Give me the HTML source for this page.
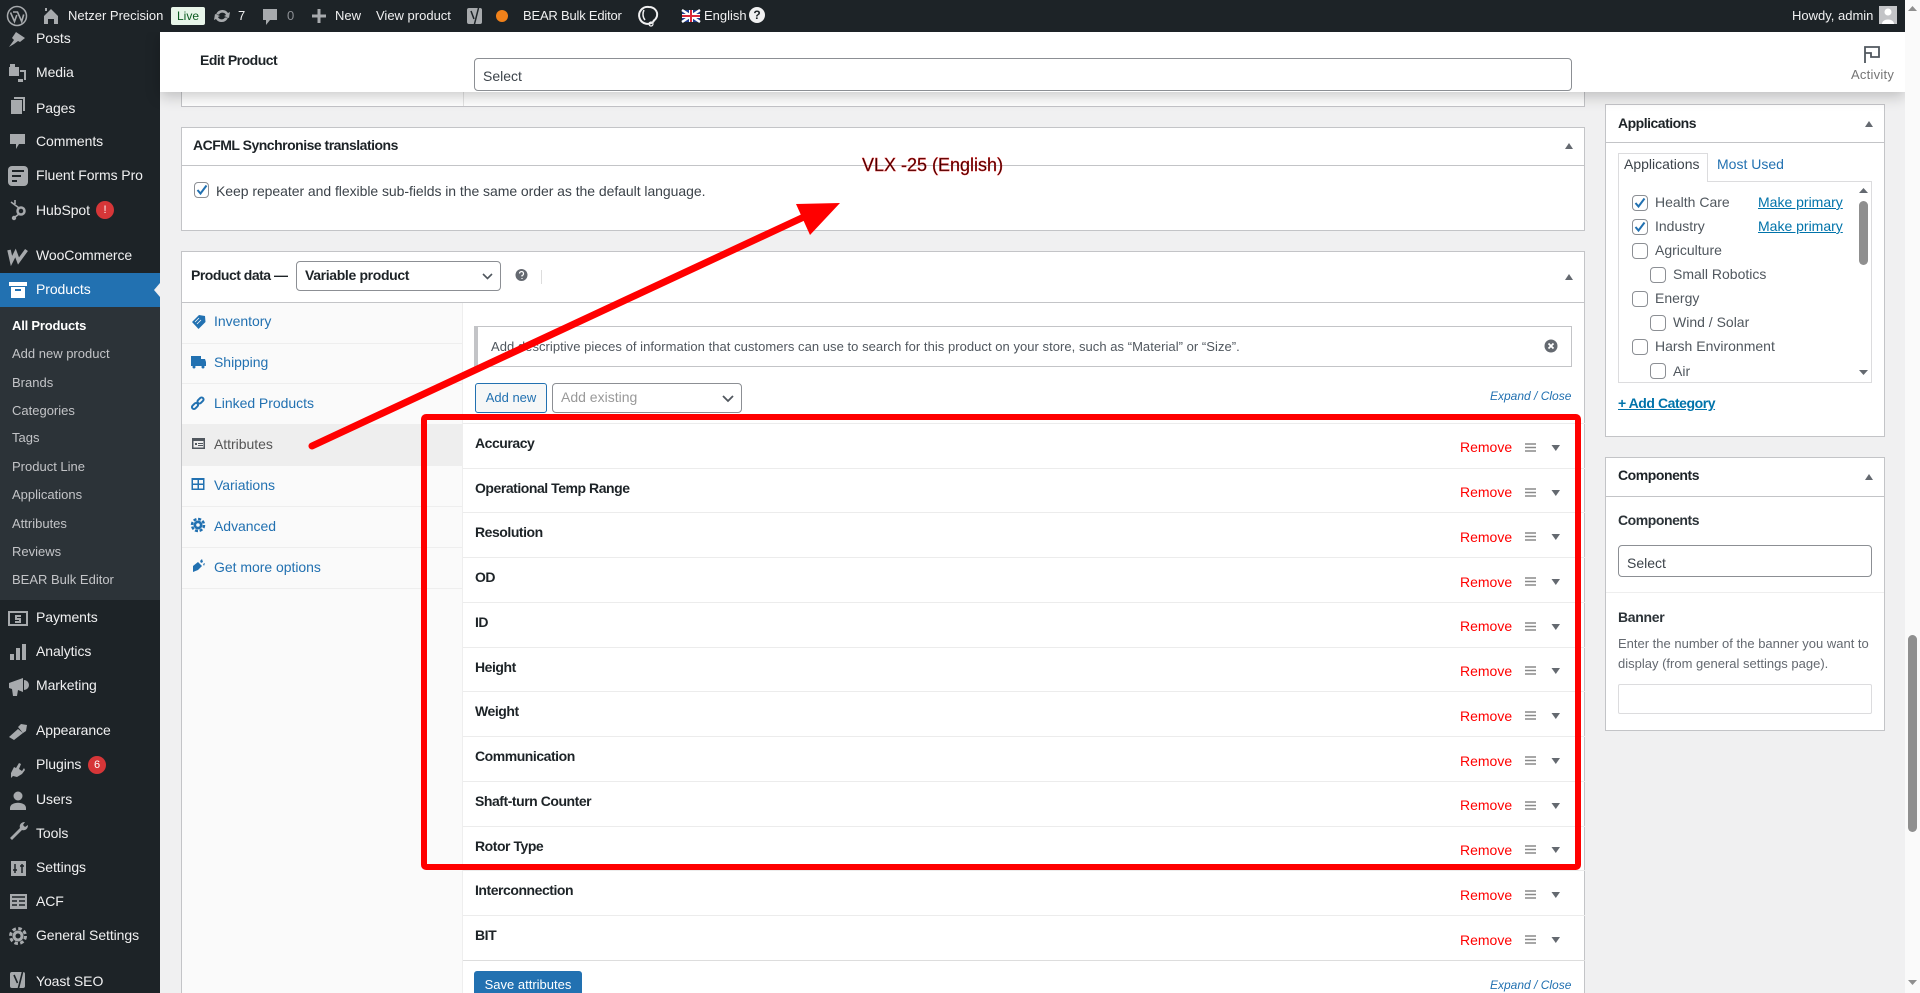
<!DOCTYPE html>
<html lang="en"><head><meta charset="utf-8"><title>Edit Product</title>
<style>
*{box-sizing:border-box}
html,body{margin:0;padding:0;width:1920px;height:993px;overflow:hidden;background:#f0f0f1;font-family:"Liberation Sans",Arial,sans-serif;font-size:14px;color:#3c434a}
#w{position:relative;width:1920px;height:993px;overflow:hidden}
.a{position:absolute}
.t{position:absolute;white-space:nowrap;line-height:20px;height:20px}
.m{color:#f0f0f1;left:36px;font-size:14px;letter-spacing:-.08px}
.s{color:#c3c4c7;left:12px;font-size:13px}
.b{font-weight:bold;color:#1d2327;letter-spacing:-.5px}
.tb{color:#f0f0f1;font-size:13px;top:6px}
.tab{color:#2271b1;left:214px;font-size:14px;letter-spacing:-.03px}
.rl{left:475px;font-weight:bold;color:#1d2327;font-size:14px;letter-spacing:-.46px}
.rr{left:1460px;color:#f00;font-size:14px}
.l{position:absolute;left:463px;width:1122px;height:1px;background:#ececec}
.tl{position:absolute;left:182px;width:281px;height:1px;background:#eee}
.it{font-size:14px;color:#50575e}
.mp{left:1758px;color:#0073aa;text-decoration:underline;font-size:14px}
.ex{font-style:italic;color:#2271b1;font-size:12px;left:1491px}
svg{position:absolute;left:0;top:0;overflow:hidden}
</style></head><body><div id="w">

<!-- sidebar -->
<div class="a" style="left:0;top:0;width:160px;height:993px;background:#1d2327"></div>
<div class="a" style="left:0;top:307px;width:160px;height:293px;background:#2c3338"></div>
<div class="a" style="left:0;top:273px;width:160px;height:34px;background:#2271b1"></div>
<span class="t m" style="top:28px">Posts</span>
<span class="t m" style="top:62px">Media</span>
<span class="t m" style="top:98px">Pages</span>
<span class="t m" style="top:131px">Comments</span>
<span class="t m" style="top:165px">Fluent Forms Pro</span>
<span class="t m" style="top:200px">HubSpot</span>
<span class="t m" style="top:245px">WooCommerce</span>
<span class="t m" style="top:279px;color:#fff">Products</span>
<span class="t s" style="top:316px;color:#fff;font-weight:bold;letter-spacing:-.2px">All Products</span>
<span class="t s" style="top:344px">Add new product</span>
<span class="t s" style="top:373px">Brands</span>
<span class="t s" style="top:401px">Categories</span>
<span class="t s" style="top:428px">Tags</span>
<span class="t s" style="top:457px">Product Line</span>
<span class="t s" style="top:485px">Applications</span>
<span class="t s" style="top:514px">Attributes</span>
<span class="t s" style="top:542px">Reviews</span>
<span class="t s" style="top:570px">BEAR Bulk Editor</span>
<span class="t m" style="top:607px">Payments</span>
<span class="t m" style="top:641px">Analytics</span>
<span class="t m" style="top:675px">Marketing</span>
<span class="t m" style="top:720px">Appearance</span>
<span class="t m" style="top:754px">Plugins</span>
<span class="t m" style="top:789px">Users</span>
<span class="t m" style="top:823px">Tools</span>
<span class="t m" style="top:857px">Settings</span>
<span class="t m" style="top:891px">ACF</span>
<span class="t m" style="top:925px">General Settings</span>
<span class="t m" style="top:971px">Yoast SEO</span>
<div class="a" style="left:96px;top:201px;width:18px;height:18px;border-radius:9px;background:#d63638;color:#fff;font-size:11px;text-align:center;line-height:18px">!</div>
<div class="a" style="left:88px;top:756px;width:18px;height:18px;border-radius:9px;background:#d63638;color:#fff;font-size:11px;text-align:center;line-height:18px">6</div>

<!-- page content -->
<div class="a" style="left:181px;top:60px;width:1404px;height:47px;background:#fff;border:1px solid #c3c4c7"></div>
<div class="a" style="left:463px;top:60px;width:1px;height:46px;background:#e4e4e4"></div>

<div class="a" style="left:181px;top:127px;width:1404px;height:104px;background:#fff;border:1px solid #c3c4c7"></div>
<div class="a" style="left:181px;top:165px;width:1404px;height:1px;background:#c3c4c7"></div>
<span class="t b" style="left:193px;top:135px">ACFML Synchronise translations</span>
<div class="a" style="left:194px;top:182px;width:15px;height:16px;border:1px solid #8c8f94;border-radius:4px;background:#fff"></div>
<span class="t" style="left:216px;top:181px;color:#3c434a;letter-spacing:-.05px">Keep repeater and flexible sub-fields in the same order as the default language.</span>

<div class="a" style="left:181px;top:251px;width:1404px;height:760px;background:#fff;border:1px solid #c3c4c7"></div>
<div class="a" style="left:181px;top:302px;width:1404px;height:1px;background:#c3c4c7"></div>
<span class="t b" style="left:191px;top:265px">Product data —</span>
<div class="a" style="left:296px;top:261px;width:205px;height:30px;border:1px solid #8c8f94;border-radius:4px;background:#fff"></div>
<span class="t b" style="left:305px;top:265px;letter-spacing:-.35px">Variable product</span>
<div class="a" style="left:541px;top:270px;width:1px;height:14px;background:#ddd"></div>

<div class="a" style="left:182px;top:303px;width:281px;height:690px;background:#fafafa;border-right:1px solid #eee"></div>
<div class="a" style="left:182px;top:424px;width:281px;height:42px;background:#eee"></div>
<div class="tl" style="top:343px"></div><div class="tl" style="top:383px"></div><div class="tl" style="top:506px"></div><div class="tl" style="top:547px"></div><div class="tl" style="top:588px"></div>
<span class="t tab" style="top:311px">Inventory</span>
<span class="t tab" style="top:352px">Shipping</span>
<span class="t tab" style="top:393px">Linked Products</span>
<span class="t tab" style="top:434px;color:#555">Attributes</span>
<span class="t tab" style="top:475px">Variations</span>
<span class="t tab" style="top:516px">Advanced</span>
<span class="t tab" style="top:557px">Get more options</span>

<div class="a" style="left:474px;top:326px;width:1098px;height:41px;background:#fff;border:1px solid #c3c4c7;border-left:4px solid #c3c4c7"></div>
<span class="t" style="left:491px;top:337px;font-size:13px;color:#50575e;letter-spacing:.04px">Add descriptive pieces of information that customers can use to search for this product on your store, such as “Material” or “Size”.</span>
<div class="a" style="left:475px;top:383px;width:72px;height:30px;background:#f6f7f7;border:1px solid #2271b1;border-radius:3px;color:#2271b1;font-size:13px;text-align:center;line-height:28px">Add new</div>
<div class="a" style="left:552px;top:383px;width:190px;height:30px;background:#fff;border:1px solid #8c8f94;border-radius:4px"></div>
<span class="t" style="left:561px;top:387px;color:#999;font-size:14px">Add existing</span>
<span class="t ex" style="top:386px;left:1490px">Expand / Close</span>

<div class="l" style="top:423px"></div><div class="l" style="top:468px"></div><div class="l" style="top:512px"></div><div class="l" style="top:557px"></div><div class="l" style="top:602px"></div><div class="l" style="top:647px"></div><div class="l" style="top:691px"></div><div class="l" style="top:736px"></div><div class="l" style="top:781px"></div><div class="l" style="top:826px"></div><div class="l" style="top:870px"></div><div class="l" style="top:915px"></div><div class="l" style="top:960px;background:#ddd"></div>

<span class="t rl" style="top:433px">Accuracy</span>
<span class="t rl" style="top:478px">Operational Temp Range</span>
<span class="t rl" style="top:522px">Resolution</span>
<span class="t rl" style="top:567px">OD</span>
<span class="t rl" style="top:612px">ID</span>
<span class="t rl" style="top:657px">Height</span>
<span class="t rl" style="top:701px">Weight</span>
<span class="t rl" style="top:746px">Communication</span>
<span class="t rl" style="top:791px">Shaft-turn Counter</span>
<span class="t rl" style="top:836px">Rotor Type</span>
<span class="t rl" style="top:880px">Interconnection</span>
<span class="t rl" style="top:925px">BIT</span>

<span class="t rr" style="top:437px">Remove</span>
<span class="t rr" style="top:482px">Remove</span>
<span class="t rr" style="top:527px">Remove</span>
<span class="t rr" style="top:572px">Remove</span>
<span class="t rr" style="top:616px">Remove</span>
<span class="t rr" style="top:661px">Remove</span>
<span class="t rr" style="top:706px">Remove</span>
<span class="t rr" style="top:751px">Remove</span>
<span class="t rr" style="top:795px">Remove</span>
<span class="t rr" style="top:840px">Remove</span>
<span class="t rr" style="top:885px">Remove</span>
<span class="t rr" style="top:930px">Remove</span>

<div class="a" style="left:474px;top:971px;width:108px;height:30px;background:#2271b1;border-radius:3px;color:#fff;font-size:13px;text-align:center;line-height:28px">Save attributes</div>
<span class="t ex" style="top:975px;left:1490px">Expand / Close</span>

<!-- right column -->
<div class="a" style="left:1605px;top:104px;width:280px;height:333px;background:#fff;border:1px solid #c3c4c7"></div>
<div class="a" style="left:1605px;top:142px;width:280px;height:1px;background:#c3c4c7"></div>
<span class="t b" style="left:1618px;top:113px">Applications</span>
<div class="a" style="left:1618px;top:181px;width:254px;height:202px;background:#fff;border:1px solid #dcdcde"></div>
<div class="a" style="left:1618px;top:153px;width:90px;height:29px;background:#fff;border:1px solid #dcdcde;border-bottom:0"></div>
<span class="t" style="left:1624px;top:154px;color:#3c434a">Applications</span>
<span class="t" style="left:1717px;top:154px;color:#2271b1">Most Used</span>
<span class="t it" style="left:1655px;top:192px">Health Care</span>
<span class="t it" style="left:1655px;top:216px">Industry</span>
<span class="t it" style="left:1655px;top:240px">Agriculture</span>
<span class="t it" style="left:1673px;top:264px">Small Robotics</span>
<span class="t it" style="left:1655px;top:288px">Energy</span>
<span class="t it" style="left:1673px;top:312px">Wind / Solar</span>
<span class="t it" style="left:1655px;top:336px">Harsh Environment</span>
<span class="t it" style="left:1673px;top:361px">Air</span>
<span class="t mp" style="top:192px">Make primary</span>
<span class="t mp" style="top:216px">Make primary</span>
<div class="a" style="left:1632px;top:195px;width:16px;height:16px;border:1px solid #8c8f94;border-radius:4px"></div>
<div class="a" style="left:1632px;top:219px;width:16px;height:16px;border:1px solid #8c8f94;border-radius:4px"></div>
<div class="a" style="left:1632px;top:243px;width:16px;height:16px;border:1px solid #8c8f94;border-radius:4px"></div>
<div class="a" style="left:1650px;top:267px;width:16px;height:16px;border:1px solid #8c8f94;border-radius:4px"></div>
<div class="a" style="left:1632px;top:291px;width:16px;height:16px;border:1px solid #8c8f94;border-radius:4px"></div>
<div class="a" style="left:1650px;top:315px;width:16px;height:16px;border:1px solid #8c8f94;border-radius:4px"></div>
<div class="a" style="left:1632px;top:339px;width:16px;height:16px;border:1px solid #8c8f94;border-radius:4px"></div>
<div class="a" style="left:1650px;top:363px;width:16px;height:16px;border:1px solid #8c8f94;border-radius:4px"></div>
<div class="a" style="left:1859px;top:201px;width:9px;height:64px;background:#8f8f8f;border-radius:5px"></div>
<span class="t" style="left:1618px;top:393px;color:#0073aa;font-weight:bold;text-decoration:underline;letter-spacing:-.45px">+ Add Category</span>

<div class="a" style="left:1605px;top:457px;width:280px;height:274px;background:#fff;border:1px solid #c3c4c7"></div>
<div class="a" style="left:1605px;top:496px;width:280px;height:1px;background:#c3c4c7"></div>
<span class="t b" style="left:1618px;top:465px;letter-spacing:-.45px">Components</span>
<span class="t b" style="left:1618px;top:510px;letter-spacing:-.45px;color:#2c3338">Components</span>
<div class="a" style="left:1618px;top:545px;width:254px;height:32px;border:1px solid #8c8f94;border-radius:4px;background:#fff"></div>
<span class="t" style="left:1627px;top:553px;color:#3c434a">Select</span>
<div class="a" style="left:1606px;top:592px;width:278px;height:1px;background:#eee"></div>
<span class="t b" style="left:1618px;top:607px;letter-spacing:-.3px;color:#2c3338">Banner</span>
<span class="t" style="left:1618px;top:634px;font-size:13px;color:#646970">Enter the number of the banner you want to</span>
<span class="t" style="left:1618px;top:654px;font-size:13px;color:#646970">display (from general settings page).</span>
<div class="a" style="left:1618px;top:684px;width:254px;height:30px;border:1px solid #dcdcde;border-radius:2px;background:#fff"></div>

<!-- sticky header -->
<div class="a" style="left:160px;top:32px;width:1745px;height:60px;background:#fff;box-shadow:0 4px 14px rgba(0,0,0,.22)"></div>
<span class="t b" style="left:200px;top:50px">Edit Product</span>
<div class="a" style="left:474px;top:58px;width:1098px;height:33px;background:#fff;border:1px solid #8c8f94;border-radius:4px"></div>
<span class="t" style="left:483px;top:66px;color:#3c434a">Select</span>
<span class="t" style="left:1851px;top:65px;font-size:13px;letter-spacing:.25px;color:#757575">Activity</span>

<!-- admin bar -->
<div class="a" style="left:0;top:0;width:1905px;height:32px;background:#1d2327"></div>
<div class="a" style="left:1905px;top:0;width:15px;height:993px;background:#fafafa"></div>
<div class="a" style="left:1908px;top:635px;width:9px;height:197px;background:#8f8f8f;border-radius:5px"></div>
<span class="t tb" style="left:68px">Netzer Precision</span>
<div class="a" style="left:171px;top:7px;width:34px;height:18px;background:#e8f5e9;border-radius:2px;color:#0b5a1f;font-size:12px;text-align:center;line-height:18px">Live</div>
<span class="t tb" style="left:238px">7</span>
<span class="t tb" style="left:287px;color:#8c8f94">0</span>
<span class="t tb" style="left:335px">New</span>
<span class="t tb" style="left:376px">View product</span>
<span class="t tb" style="left:523px;letter-spacing:-.2px">BEAR Bulk Editor</span>
<span class="t tb" style="left:704px">English</span>
<span class="t tb" style="left:1792px">Howdy, admin</span>
<div class="a" style="left:749px;top:7px;width:16px;height:16px;border-radius:8px;background:#f0f0f1;color:#1d2327;font-size:12px;font-weight:bold;text-align:center;line-height:16px">?</div>
<div class="a" style="left:1879px;top:6px;width:18px;height:18px;background:#c3c4c7"></div>

<!-- icons -->
<svg width="1920" height="993" viewBox="0 0 1920 993">
<defs>
<g id="rowi"><path d="M1525 444h11M1525 447.500h11M1525 451h11" stroke="#8a8a8a" stroke-width="1.400" fill="none"/><path d="M1551.500 445h8.500l-4.200 6z" fill="#646970"/></g>
<g id="up"><path d="M0 6h8l-4-6z" fill="#646970"/></g>
<path id="chk" d="M3.500 8l3 3.500 6-8" fill="none" stroke="#2271b1" stroke-width="2"/>
</defs>
<!-- row controls -->
<use href="#rowi" y="0"/><use href="#rowi" y="45"/><use href="#rowi" y="89"/><use href="#rowi" y="134"/><use href="#rowi" y="179"/><use href="#rowi" y="223"/><use href="#rowi" y="268"/><use href="#rowi" y="313"/><use href="#rowi" y="358"/><use href="#rowi" y="402"/><use href="#rowi" y="447"/><use href="#rowi" y="492"/>
<!-- box toggles -->
<use href="#up" x="1565" y="143"/><use href="#up" x="1565" y="274"/><use href="#up" x="1865" y="121"/><use href="#up" x="1865" y="474"/>
<!-- checks -->
<use href="#chk" x="194" y="182"/><use href="#chk" x="1632" y="195"/><use href="#chk" x="1632" y="219"/>
<!-- panel scroll arrows -->
<path d="M1859 193h9l-4.500-5z" fill="#646970"/><path d="M1859 370h9l-4.500 5z" fill="#646970"/>
<!-- page scroll arrows -->
<path d="M1908 11h9l-4.500-5z" fill="#8f8f8f"/><path d="M1908 980h9l-4.500 5z" fill="#8f8f8f"/>
<!-- selects -->
<path d="M483 274l4.500 4.500 4.500-4.500" fill="none" stroke="#50575e" stroke-width="1.600"/>
<path d="M723 396l5 5 5-5" fill="none" stroke="#50575e" stroke-width="1.800"/>
<!-- help + notice close -->
<circle cx="521.500" cy="275" r="6" fill="#646970"/><path d="M519.500 273.500a2 2 0 1 1 2.500 2v1M522 278v1" stroke="#fff" fill="none" stroke-width="1.200"/>
<circle cx="1551" cy="346" r="6.500" fill="#646970"/><path d="M1548.500 343.500l5 5M1553.500 343.500l-5 5" stroke="#fff" stroke-width="1.800"/>
<!-- activity flag -->
<path d="M1865 63V47h14v10h-8v-4h-6" fill="none" stroke="#50575e" stroke-width="1.800"/>
<!-- tab icons -->
<g fill="#2271b1">
<path d="M192 322l7-7 6 1 .5 6-7 7z"/><path d="M195 322l4-4M197 324l4-4" stroke="#fafafa" stroke-width=".8"/>
<path d="M191 356h10v10h-10zM201 359h4l1 3v4h-5z"/><circle cx="194" cy="367" r="1.500"/><circle cx="203" cy="367" r="1.500"/>
<g fill="none" stroke="#2271b1" stroke-width="2"><rect x="-3.500" y="-2" width="7" height="4" rx="2" transform="translate(195 406) rotate(-45)"/><rect x="-3.500" y="-2" width="7" height="4" rx="2" transform="translate(200.500 400.500) rotate(-45)"/></g>
<path d="M191.500 478h13v12h-13z M193 480v3.500h4.500V480zM199 480v3.500h4V480zM193 485v3.500h4.500V485zM199 485v3.500h4V485z" fill-rule="evenodd"/>
<circle cx="198" cy="525" r="4.500"/><circle cx="198" cy="525" r="6" fill="none" stroke="#2271b1" stroke-width="2.500" stroke-dasharray="3 1.700"/><circle cx="198" cy="525" r="1.800" fill="#fafafa"/>
<path d="M193 566l5-4 4 4-4 4-5 2zM200 561l2-2 1 3-2 1zM203 564l2-1-1 3z"/>
</g>
<path d="M192 438h13v11h-13z" fill="#50575e"/><path d="M193.500 441h10v6.500h-10z" fill="#eee"/><path d="M195 443h2v2h-2zM198 443h5v1h-5zM198 445h5v1h-5z" fill="#50575e"/>
<!-- admin bar icons -->
<circle cx="17" cy="16" r="9.500" fill="none" stroke="#a7aaad" stroke-width="1.500"/>
<path d="M10.500 12.500l4 9 2.300-6.500M13 12h4.500l4.200 9.500 2-7" fill="none" stroke="#a7aaad" stroke-width="1.600"/>
<g fill="#a7aaad">
<path d="M44 16v8h4v-5h6v5h4v-8l-7-7z M45 8h2v3h-2z"/>
<path d="M222 10a6.500 6.500 0 0 1 6 3l2-1-1 6-5-2 2-1a4 4 0 0 0-7-.5h-3a6.500 6.500 0 0 1 6-4.500zM222 22a6.500 6.500 0 0 1-6-3l-2 1 1-6 5 2-2 1a4 4 0 0 0 7 .5h3a6.500 6.500 0 0 1-6 4.500z"/>
<path d="M263 9h14v11h-7l-4 5v-5h-3z"/>
<path d="M312 14.500h5.500V9h3v5.500h5.500v3h-5.500V23h-3v-5.500H312z"/>
<rect x="467" y="8" width="15" height="16" rx="2"/><path d="M471 11l3 8M479 6l-5 20" stroke="#1d2327" fill="none" stroke-width="1.500"/>
</g>
<circle cx="502" cy="16" r="6" fill="#f0811a"/>
<path d="M654 21a8.500 8.500 0 1 1-5-14c5 0 9 4 8 9-.5 2-2 4-4 5" fill="none" stroke="#f0f0f1" stroke-width="2"/><path d="M644 10c-1.500 3-1.500 7 1 10" fill="none" stroke="#f0f0f1" stroke-width="1.500"/><circle cx="651" cy="24" r="2" fill="none" stroke="#f0f0f1" stroke-width="1.200"/>
<rect x="682" y="10" width="18" height="12" fill="#1f3b8c"/><path d="M682 10l18 12M700 10l-18 12" stroke="#fff" stroke-width="2.500"/><path d="M682 16h18M691 10v12" stroke="#fff" stroke-width="4"/><path d="M682 16h18M691 10v12" stroke="#d8293a" stroke-width="2"/>
<circle cx="1888" cy="12" r="3.500" fill="#fff"/><path d="M1882 24c0-6 12-6 12 0z" fill="#fff"/>
<!-- sidebar icons -->
<g fill="#a7aaad">
<path d="M9 47l5-7-2-2 4-6 9 6-5 4-2-1-4 3z"/>
<path d="M9 67h10v9H9zM10 64h5v3h-5zM20 70h6v10h-2v-8h-4zM18 79h5v3h-5z"/>
<path d="M11 100h11v14H11zM14 97h11v14h-2V99h-9z"/>
<path d="M10 134h15v10h-6l-3 5v-5h-6z"/>
<rect x="8" y="166" width="20" height="20" rx="4"/><path d="M12 171h12M12 176h9M12 181h5" stroke="#1d2327" stroke-width="2"/>
<circle cx="21" cy="211" r="3.500" fill="none" stroke="#a7aaad" stroke-width="2.500"/><circle cx="14" cy="218" r="2.200"/><path d="M11 202l8 6M15 204v-4M19 214l-4 3" stroke="#a7aaad" stroke-width="1.600"/>
<path d="M9 250l2.500 11 4-8 3 8 8-11" fill="none" stroke="#a7aaad" stroke-width="3.500"/>
<path d="M9 282h18v4H9zM11 287h14v11H11z" fill="#fff"/><path d="M15 289h6v2h-6z" fill="#2271b1"/>
<path d="M154 290l6-7v14z" fill="#f0f0f1"/>
<path d="M8 611h20v15H8zM10 613v11h16v-11z" fill-rule="evenodd"/><path d="M15 615h6v2h-4v1h4v5h-6v-2h4v-1h-4z"/>
<path d="M10 654h4v6h-4zM16 648h4v12h-4zM22 644h4v16h-4z"/>
<path d="M9 683l14-5v14l-5-2-1 6h-4l-1-7-3-1zM24 680a5 5 0 0 1 0 10z"/>
<path d="M9 737l9-8 5 4-9 7zM18 727l3-3 6 1-1 6-3 2z"/>
<path d="M11 773l3-6 2 1 3-5 2 1-2 5 3 2 2-3 1 2-3 4-5 3-4-1-2 2z"/>
<circle cx="18" cy="796" r="4.500"/><path d="M10 808c0-7 16-7 16 0v2H10z"/>
<path d="M10 838l10-10c-1-3 1-6 5-6l-2 3 2 2 3-2c0 4-3 6-6 5l-10 10z"/>
<path d="M11 861h15v15H11z"/><path d="M15 864v9M22 864v9M13 870h4M20 866h4" stroke="#1d2327" stroke-width="1.500"/>
<path d="M10 894h17v15H10z"/><path d="M12 897h13M12 901h5M19 901h6M12 905h5M19 905h6" stroke="#1d2327" stroke-width="1.600"/>
<circle cx="18" cy="936" r="5.500"/><circle cx="18" cy="936" r="7.500" fill="none" stroke="#a7aaad" stroke-width="3" stroke-dasharray="3.500 2.400"/><circle cx="18" cy="936" r="2.500" fill="#1d2327"/>
<rect x="10" y="972" width="15" height="16" rx="2"/><path d="M14 975l3.500 8M23 970l-5 20" stroke="#1d2327" fill="none" stroke-width="1.600"/>
</g>
<!-- annotations -->
<path d="M312 446L806 216" stroke="#f00" stroke-width="7" stroke-linecap="round" fill="none"/>
<path d="M796 204L840 203L810 235z" fill="#f00"/>
<rect x="424" y="417" width="1154" height="450" rx="2" fill="none" stroke="#f00" stroke-width="6"/>
<text x="862" y="171" font-family="Liberation Sans, Arial, sans-serif" font-size="18" fill="#3a0000" stroke="#e02020" stroke-width=".4">VLX -25 (English)</text>
</svg>
</div></body></html>
